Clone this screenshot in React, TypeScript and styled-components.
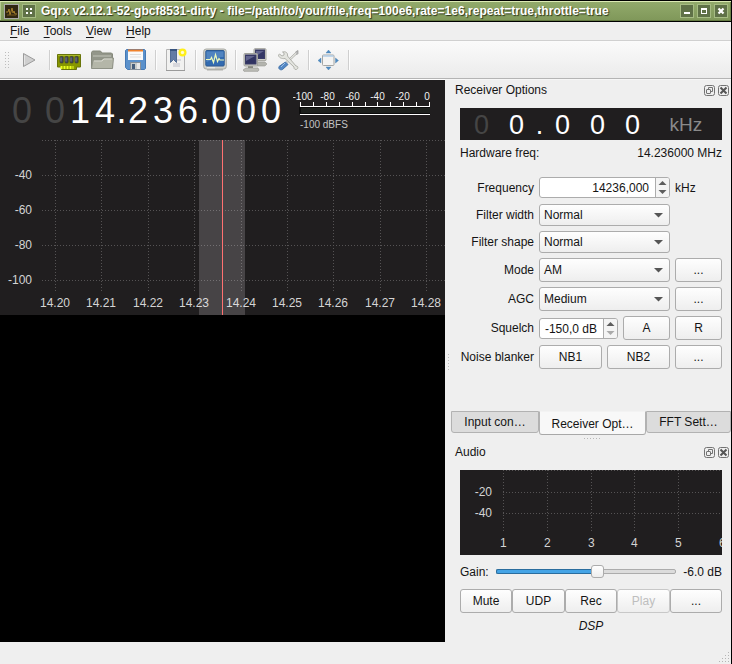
import React from "react";
import styled, { createGlobalStyle, css } from "styled-components";

const Global = createGlobalStyle`
  * { box-sizing: border-box; }
  body { margin: 0; background: #efefef; overflow: hidden; }
  button { font: inherit; color: inherit; padding: 0; margin: 0; }
`;

const Window = styled.div`
  width: 732px;
  height: 664px;
  display: flex;
  flex-direction: column;
  background: #efefef;
  border-right: 1px solid #000;
  font: 12px/14px "Liberation Sans", Arial, sans-serif;
  color: #141414;
  overflow: hidden;
`;

const TitleBar = styled.header`
  height: 22px;
  flex: none;
  display: flex;
  align-items: center;
  gap: 3px;
  padding: 0 3px 0 4px;
  border-top: 1px solid #000;
  border-bottom: 1px solid #000;
  background: linear-gradient(#93ab6c, #7f9759);
  box-shadow: inset 0 1px #dceab4, inset -1px 0 #6b8049, inset 0 -1px #657b43, inset 1px 0 #b4c890;
`;

const TitleText = styled.h1`
  flex: 1;
  margin: 0 0 0 1px;
  padding-left: 1px;
  font-size: 12px;
  line-height: 18px;
  font-weight: bold;
  letter-spacing: 0.024px;
  color: #fff;
  white-space: nowrap;
  text-shadow: 1px 1px 1px #2c361c;
`;

const WindowButton = styled.button`
  width: 14px;
  height: 14px;
  display: flex;
  border: 1px solid #a6bc83;
  background: #5f7147;
`;

const AppIcon = styled.span`
  width: 15px;
  height: 15px;
  display: flex;
  border: 1px solid #aaa;
  background: #302612;
`;

const WindowControls = styled.div`
  display: flex;
  gap: 3px;
`;

const MenuBar = styled.nav`
  height: 19px;
  flex: none;
  display: flex;
  gap: 14.3px;
  padding: 2px 10px 0;
  border-bottom: 1px solid #d0d0d0;
  u { text-underline-offset: 2px; }
`;

const ToolBar = styled.div`
  height: 38px;
  flex: none;
  display: flex;
  align-items: center;
  background: linear-gradient(#fafafa, #ebebeb);
  border-bottom: 1px solid #b4b4b4;
  border-top: 1px solid #fbfbfb;
`;

const Handle = styled.svg`
  width: 13px;
  height: 20px;
`;

const Tool = styled.button`
  width: 33px;
  height: 34px;
  border: 0;
  background: none;
  padding: 0 0 0 4px;
  display: flex;
  align-items: center;
`;

const Separator = styled.i`
  width: 2px;
  height: 20px;
  margin: 0 2px 0 3px;
  background: linear-gradient(90deg, #cfcfcf 50%, #fdfdfd 50%);
`;

const Workspace = styled.div`
  flex: 1;
  display: flex;
  min-height: 0;
`;

const Receiver = styled.main`
  width: 445px;
  height: 563px;
  flex: none;
  display: flex;
  flex-direction: column;
  background: #000;
  border-top: 1px solid #fcfcfc;
`;

const ReceiverHeader = styled.div`
  height: 60px;
  display: flex;
  background: #201e1f;
`;

const Digits = styled.div<{ $small?: boolean }>`
  display: flex;
  color: #fff;
  ${({ $small }) =>
    $small
      ? css`width: 186px; padding-left: 4px; font-size: 27px; line-height: 34px;`
      : css`width: 293px; padding-left: 9.5px; font-size: 36px; line-height: 61px;`}
`;

const Digit = styled.span<{ $w: number; $dim?: boolean }>`
  width: ${(p) => p.$w}px;
  flex: none;
  display: flex;
  justify-content: center;
  color: ${(p) => (p.$dim ? "#454545" : "inherit")};
`;

const Side = styled.aside`
  flex: 1;
  min-width: 0;
  display: flex;
  border-top: 1px solid #f6f6f6;
`;

const Splitter = styled.svg`
  width: 6px;
  height: 562px;
  flex: none;
`;

const Docks = styled.div`
  flex: 1;
  min-width: 0;
`;

const DockTitle = styled.div`
  height: 20px;
  display: flex;
  align-items: center;
  gap: 3px;
  padding: 0 2px 0 4px;
  span { flex: 1; }
`;

const Display = styled.div`
  width: 262px;
  height: 32px;
  margin: 8px 0 0 9px;
  display: flex;
  background: #201e1f;
  overflow: hidden;
`;

const Unit = styled.span`
  margin-left: 23.5px;
  font-size: 19px;
  line-height: 34px;
  color: #8a8a8a;
`;

const HardwareFrequency = styled.div`
  display: flex;
  justify-content: space-between;
  width: 262px;
  margin: 6px 0 0 9px;
  height: 14px;
`;

const Form = styled.div`
  display: grid;
  height: 234px;
  margin: 17px 9px 0 0;
  align-content: start;
`;

const Field = styled.div<{ $h: number; $gap: number }>`
  height: ${(p) => p.$h}px;
  margin-bottom: ${(p) => p.$gap}px;
  display: flex;
  align-items: center;
  gap: 5px;
`;

const Label = styled.label`
  width: 83px;
  text-align: right;
  white-space: nowrap;
`;

const frame = css`
  border: 1px solid #acacac;
  border-radius: 3px;
  background: linear-gradient(#fefefe, #eeeeee);
`;

const PushButton = styled.button<{ $w: number }>`
  ${frame}
  width: ${(p) => p.$w}px;
  height: 24px;
  flex: none;
  display: flex;
  align-items: center;
  justify-content: center;
  &:disabled { color: #bebebe; border-color: #c8c8c8; }
`;

const Combo = styled.div<{ $h: number }>`
  ${frame}
  width: 131px;
  height: ${(p) => p.$h}px;
  flex: none;
  display: flex;
  align-items: center;
  justify-content: space-between;
  padding: 0 6px 0 4px;
`;

const Spin = styled.div<{ $w: number }>`
  ${frame}
  width: ${(p) => p.$w}px;
  height: 21px;
  flex: none;
  display: flex;
  background: #fff;
  text-align: right;
  overflow: hidden;
  span { flex: 1; line-height: 20px; padding-right: 6px; white-space: nowrap; }
  svg { background: #f4f4f4; border-left: 1px solid #acacac; }
`;

const Tabs = styled.div`
  display: flex;
  height: 24px;
`;

const Tab = styled.button<{ $w: number; $active?: boolean }>`
  width: ${(p) => p.$w}px;
  height: ${(p) => (p.$active ? 24 : 22)}px;
  flex: none;
  text-align: center;
  border: 1px solid #b2b2b2;
  border-radius: 0 0 3px 3px;
  background: ${(p) => (p.$active ? "#f8f8f8" : "#dcdcdc")};
  ${(p) => p.$active && css`border-top-color: #f3f3f3; border-bottom-color: #a8a8a8; padding-top: 1px;`}
`;

const DockGrip = styled.svg`
  display: block;
  width: 280px;
  height: 7px;
`;

const AudioPlot = styled.svg`
  display: block;
  width: 262px;
  height: 85px;
  margin: 8px 0 0 9px;
`;

const GainRow = styled.div`
  width: 262px;
  height: 14px;
  margin: 10px 0 0 9px;
  display: flex;
  align-items: center;
  justify-content: space-between;
`;

const Track = styled.div`
  width: 180px;
  height: 5px;
  margin: 0 0 1px 1px;
  display: flex;
  align-items: center;
  border: 1px solid #acacac;
  border-radius: 2px;
  background: #dcdcdc;
`;

const Filled = styled.i`
  width: 96px;
  height: 5px;
  margin-left: -1px;
  flex: none;
  border: 1px solid #2a6d9e;
  border-right: 0;
  border-radius: 2px 0 0 2px;
  background: #45a4e6;
`;

const Knob = styled.i`
  ${frame}
  width: 13px;
  height: 13px;
  margin-left: -1px;
  flex: none;
`;

const AudioButtons = styled.div`
  display: flex;
  margin: 10px 0 0 9px;
`;

const DspStatus = styled.div`
  width: 262px;
  margin: 6px 0 0 9px;
  font-style: italic;
  text-align: center;
`;

const StatusBar = styled.footer`
  height: 22px;
  flex: none;
  display: flex;
  justify-content: flex-end;
  align-items: flex-end;
`;

const Meter = () => (
  <svg width="150" height="60" fontSize="10" fill="#f0f0f0">
    {[-100, -80, -60, -40, -20, 0].map((v, i) => (
      <text key={v} x={i === 5 ? 134 : 9.5 + i * 25} y="20" textAnchor="middle">{v}</text>
    ))}
    <rect x="6" y="27" width="131" height="7" fill="#0c0c0c" />
    <rect x="8" y="28" width="129" height="5" fill="#1c1f1c" />
    <g fill="#fff" shapeRendering="crispEdges">
      {[7, 20, 33, 46, 59, 72, 84, 97, 110, 123, 136].map((x) => (
        <rect key={x} x={x} y="22" width="1" height="5" />
      ))}
      <rect x="7" y="26" width="130" height="1" />
      <rect x="7" y="34" width="130" height="1" />
    </g>
    <text x="7" y="48" fill="#c4c4c4">-100 dBFS</text>
  </svg>
);

const gridX = [55, 101, 148, 194, 241, 287, 333, 380, 426];

const SpectrumPlot = styled.svg`
  display: block;
  width: 445px;
  height: 175px;
`;

const Spectrum = () => (
  <SpectrumPlot fontSize="12" fill="#d4d4d4">
    <rect width="445" height="175" fill="#201e1f" />
    <g stroke="#555354" strokeDasharray="1 2" shapeRendering="crispEdges">
      {gridX.map((x) => <path key={x} d={`M${x + 0.5} 0V152`} />)}
      {[0, 35, 70, 105, 140].map((y) => <path key={y} d={`M42 ${y + 0.5}H445`} />)}
    </g>
    {["-40", "-60", "-80", "-100"].map((t, i) => (
      <text key={t} x="32" y={39 + i * 35} textAnchor="end">{t}</text>
    ))}
    {gridX.map((x, i) => (
      <text key={x} x={x} y="167" textAnchor="middle">{`14.2${i}`}</text>
    ))}
    <rect x="199" width="46" height="175" fill="#fdf8fd" fillOpacity=".175" />
    <rect x="222" width="1" height="175" fill="#ff7171" />
  </SpectrumPlot>
);

const Audio = () => (
  <AudioPlot fontSize="12" fill="#d4d4d4">
    <rect width="262" height="85" fill="#201e1f" />
    <g stroke="#555354" strokeDasharray="1 2" shapeRendering="crispEdges">
      {[43, 87, 131, 174, 218].map((x) => <path key={x} d={`M${x + 0.5} 0V62`} />)}
      {[0, 22, 43].map((y) => <path key={y} d={`M43 ${y + 0.5}H262`} />)}
    </g>
    <text x="32" y="26" textAnchor="end">-20</text>
    <text x="32" y="47" textAnchor="end">-40</text>
    {[43, 87, 131, 174, 218, 262].map((x, i) => (
      <text key={x} x={x + 0.3} y="77" textAnchor="middle">{i + 1}</text>
    ))}
  </AudioPlot>
);

const DockButtons = () => (
  <>
    <svg width="11" height="11" fill="none" stroke="#737373">
      <rect x=".5" y=".5" width="10" height="10" rx="2" />
      <rect x="2.5" y="4.5" width="4" height="4" rx=".5" />
      <path d="M4.5 4V2.5h4v4H7" />
    </svg>
    <svg width="11" height="11" fill="none" stroke="#737373">
      <rect x=".5" y=".5" width="10" height="10" rx="2" />
      <path d="m2.500 2.500 6 6M8.500 2.500l-6 6" strokeWidth="2" stroke="#555" />
    </svg>
  </>
);

const ComboArrow = () => (
  <svg width="9" height="5"><path d="M0 0h9L4.5 4.5z" fill="#555" /></svg>
);

const SpinArrows = ({ muted }: { muted?: boolean }) => (
  <svg width="14" height="19">
    <path d="m2.500 7 4-4 4 4z" fill="#5d5d5d" />
    <path d="m2.500 12 4 4 4-4z" fill={muted ? "#aaa" : "#5d5d5d"} />
  </svg>
);

const Svg = ({ children }: { children: React.ReactNode }) => (
  <svg width="24" height="24" viewBox="0 0 24 24" fill="none">{children}</svg>
);

const PlayIcon = () => (
  <Svg><path d="M6.500 5.500v13L18 12z" fill="#cfcfcf" stroke="#9b9b9b" /><path d="M7.500 7.500v9" stroke="#e4e4e4" /></Svg>
);

const MemoryIcon = () => (
  <Svg>
    <path d="M.5 6.500h23v12.500h-4v2.500h-15V19h-4z" fill="#879600" stroke="#69750a" />
    <path d="M1 7.500h22" stroke="#a8b72b" />
    {[3, 8, 13, 18].map((x) => (
      <g key={x}>
        <rect x={x} y="8.500" width="3.200" height="6.500" rx="1" fill="#424853" stroke="#363b32" strokeWidth=".6" />
        <path d={`M${x + 1} 9.500v4`} stroke="#8a919a" strokeWidth=".8" />
      </g>
    ))}
    <path d="M3.500 19.500h13" stroke="#eaff20" strokeWidth="3" strokeDasharray="2 1" />
  </Svg>
);

const FolderIcon = () => (
  <Svg>
    <path d="M1.500 20V4.500l1-1.500h8l1.500 2h9.500l1 1V20z" fill="#93968a" stroke="#85887b" />
    <path d="M3 8h18" stroke="#c4c6bb" />
    <path d="M1.500 20.500 3 12h8l2-2h10.500l-1 10.500z" fill="#b4b6a8" stroke="#8f9286" />
    <path d="M4 13h8l2-2h8" stroke="#d5d6cd" />
  </Svg>
);

const SaveIcon = () => (
  <Svg>
    <path d="M3.500 1.500h18l1 1v18l-1 1h-17l-2-2v-17z" fill="#5b91cb" stroke="#4679b4" />
    <path d="M5 2h15v10H5z" fill="#fafafa" /><path d="M5 2.500h15" stroke="#f0822c" strokeWidth="2" />
    <path d="M7 6.500h11M7 9h11" stroke="#dedede" />
    <rect x="7.500" y="14.500" width="10" height="7" fill="#c8cbca" stroke="#87919b" />
    <rect x="9" y="16" width="3" height="5" fill="#455e7c" />
    <path d="M14 15h3v6h-3z" fill="#e8e8e8" />
  </Svg>
);

const BookmarkIcon = () => (
  <Svg>
    <path d="M3.500 1.500h18v21h-18z" fill="#f1f1f0" stroke="#b4b4b4" />
    <path d="M3 22.500h19" stroke="#9a9a9a" />
    <path d="M10 15h7v4h-7zM14 11h4v2h-4z" fill="#d7d7dc" />
    <path d="M7.500 1.500h6v13l-3-3-3 3z" fill="#637ca5" stroke="#526d95" />
    <path d="M7 2h7" stroke="#38547f" strokeWidth="2" />
    <circle cx="19.500" cy="4.500" r="4" fill="#ffef19" />
    <circle cx="19.500" cy="4.500" r="1.700" fill="#fffbd0" />
  </Svg>
);

const MonitorIcon = () => (
  <Svg>
    <path d="M4 21h16v1.500H4z" fill="#b2b2ae" />
    <rect x=".7" y="1" width="22.600" height="20" rx="2.500" fill="#d2d3cd" stroke="#aaaba5" />
    <rect x="2.800" y="2.500" width="18.400" height="15.500" rx="1" fill="#326bb1" stroke="#2e5b91" />
    <path d="M3.500 3.500h17V9c-6 0-10 2-17 5z" fill="#5084c0" />
    <path d="M3 11.500h4.500l1-2 2 5 2-8 2 7 1.500-3 1 1.500H21" stroke="#ebf9bb" strokeWidth="1.200" />
    <path d="M4 19.800h8" stroke="#f1f1ee" />
  </Svg>
);

const NetworkIcon = () => (
  <Svg>
    <path d="M14 14h8l2 2-2 2h-8z" fill="#b3b4ae" stroke="#9a9a94" strokeWidth=".6" />
    <rect x="11" y=".7" width="12" height="12" rx="1" fill="#cfcfc9" stroke="#a0a19b" />
    <rect x="12.500" y="2" width="9" height="8.500" fill="#343766" stroke="#3a3c66" />
    <path d="M13 3h8l-8 5z" fill="#60638e" />
    <path d="M3 20h12l1 2-1 1.300H1L0 22z" fill="#bcbdb7" stroke="#999a94" strokeWidth=".7" />
    <path d="M5 17.500h5V20H5z" fill="#85867f" />
    <rect x="1" y="5.500" width="13.500" height="12.500" rx="1" fill="#cfcfc9" stroke="#a0a19b" />
    <rect x="2.500" y="7" width="10.500" height="9" fill="#303362" stroke="#3a3c66" />
    <path d="M3 8h9l-9 5z" fill="#62658f" />
  </Svg>
);

const ToolsIcon = () => (
  <Svg>
    <path d="M21 4.500 11 14" stroke="#969791" strokeWidth="2.300" />
    <path d="M21 4.500 11 14" stroke="#e9e9e5" strokeWidth="1.100" />
    <path d="m19.500 4 2.500-1.500v3L20.500 7" fill="#bbb" stroke="#888" strokeWidth=".6" />
    <path d="m2.500 7 1-1 2.500 2 2-1V5L6.500 4c3.500-1 5.500 1 5 4l8.500 10c3 0 2 3.500 0 3.500-2 0-2-1.500-2-2.500L9 10.500c-3.500.500-6.500-1-6.500-3.500z" fill="#e3e4df" stroke="#aaaba5" strokeWidth=".9" />
    <path d="M9.500 14 12 16.500 6.500 21.500c-2 1-4.500-.500-3.500-3z" fill="#5387c5" stroke="#4574aa" />
    <path d="m5 19 4-4" stroke="#9bbee5" />
  </Svg>
);

const FullscreenIcon = () => (
  <Svg>
    <rect x="6.500" y="7" width="11.500" height="10.500" rx="1" fill="#f4f4f3" stroke="#a5a6a4" />
    <path d="M7 8h10.500" stroke="#b1cce7" strokeWidth="1.500" />
    <g fill="#4d8bc4" stroke="#4a7dac" strokeWidth=".4">
      <path d="M12.500 2 15 5h-5zM12.500 22 15 19h-5zM2 12.500 5 10v5zM22.500 12.500 19.500 10v5z" />
    </g>
  </Svg>
);

export default function App() {
  return (
    <>
      <Global />
      <Window>
        <TitleBar>
          <AppIcon>
            <svg width="13" height="13" fill="none"><path d="M1 7h2l1-3 1 6 2-7 1 5 1-2 1 3h2" stroke="#a57f2b" /><path d="M2 10h9" stroke="#76581d" /></svg>
          </AppIcon>
          <WindowButton>
            <svg width="12" height="12" fill="#fff"><path d="M3 3h2v2H3zM7 3h2v2H7zM3 7h2v2H3zM7 7h2v2H7z" /></svg>
          </WindowButton>
          <TitleText>Gqrx v2.12.1-52-gbcf8531-dirty - file=/path/to/your/file,freq=100e6,rate=1e6,repeat=true,throttle=true</TitleText>
          <WindowControls>
            <WindowButton><svg width="12" height="12"><path d="M3 7h6v2H3z" fill="#fff" /></svg></WindowButton>
            <WindowButton><svg width="12" height="12"><path d="M3 3h6v6H3zM4 5v3h4V5z" fill="#fff" fillRule="evenodd" /></svg></WindowButton>
            <WindowButton><svg width="12" height="12"><path d="m3.500 3.500 5 5m0-5-5 5" stroke="#fff" strokeWidth="2.200" /></svg></WindowButton>
          </WindowControls>
        </TitleBar>
        <MenuBar>
          <span><u>F</u>ile</span>
          <span><u>T</u>ools</span>
          <span><u>V</u>iew</span>
          <span><u>H</u>elp</span>
        </MenuBar>
        <ToolBar>
          <Handle fill="#bdbdbd">
            {[0, 3, 6, 9, 12, 15].map((y) => <path key={y} d={`M5 ${y + 2}h1v1h-1zM8 ${y + 2}h1v1h-1z`} />)}
          </Handle>
          <Tool><PlayIcon /></Tool>
          <Separator />
          <Tool><MemoryIcon /></Tool>
          <Tool><FolderIcon /></Tool>
          <Tool><SaveIcon /></Tool>
          <Separator />
          <Tool><BookmarkIcon /></Tool>
          <Separator />
          <Tool><MonitorIcon /></Tool>
          <Separator />
          <Tool><NetworkIcon /></Tool>
          <Tool><ToolsIcon /></Tool>
          <Separator />
          <Tool><FullscreenIcon /></Tool>
          <Separator />
        </ToolBar>
        <Workspace>
          <Receiver>
            <ReceiverHeader>
              <Digits>
                <Digit $w={25} $dim>0</Digit>
                <Digit $w={8} />
                <Digit $w={25} $dim>0</Digit>
                <Digit $w={25}>1</Digit>
                <Digit $w={25}>4</Digit>
                <Digit $w={8}>.</Digit>
                <Digit $w={25}>2</Digit>
                <Digit $w={25}>3</Digit>
                <Digit $w={25}>6</Digit>
                <Digit $w={8}>.</Digit>
                <Digit $w={25}>0</Digit>
                <Digit $w={25}>0</Digit>
                <Digit $w={25}>0</Digit>
              </Digits>
              <Meter />
            </ReceiverHeader>
            <Spectrum />
          </Receiver>
          <Side>
            <Splitter fill="#bcbcbc">
              {[0, 3, 6, 9, 12, 15].map((y) => <rect key={y} x="3" y={274 + y} width="1" height="1" />)}
            </Splitter>
            <Docks>
              <DockTitle><span>Receiver Options</span><DockButtons /></DockTitle>
              <Display>
                <Digits $small>
                  <Digit $w={35} $dim>0</Digit>
                  <Digit $w={35}>0</Digit>
                  <Digit $w={11}>.</Digit>
                  <Digit $w={35}>0</Digit>
                  <Digit $w={35}>0</Digit>
                  <Digit $w={35}>0</Digit>
                </Digits>
                <Unit>kHz</Unit>
              </Display>
              <HardwareFrequency><span>Hardware freq:</span><span>14.236000 MHz</span></HardwareFrequency>
              <Form>
                <Field $h={21} $gap={6}>
                  <Label>Frequency</Label>
                  <Spin $w={131}><span>14236,000</span><SpinArrows /></Spin>
                  kHz
                </Field>
                <Field $h={22} $gap={5}><Label>Filter width</Label><Combo $h={22}>Normal<ComboArrow /></Combo></Field>
                <Field $h={22} $gap={5}><Label>Filter shape</Label><Combo $h={22}>Normal<ComboArrow /></Combo></Field>
                <Field $h={24} $gap={5}><Label>Mode</Label><Combo $h={24}>AM<ComboArrow /></Combo><PushButton $w={47}>...</PushButton></Field>
                <Field $h={24} $gap={5}><Label>AGC</Label><Combo $h={24}>Medium<ComboArrow /></Combo><PushButton $w={47}>...</PushButton></Field>
                <Field $h={24} $gap={5}>
                  <Label>Squelch</Label>
                  <Spin $w={79}><span>-150,0 dB</span><SpinArrows muted /></Spin>
                  <PushButton $w={47}>A</PushButton>
                  <PushButton $w={47}>R</PushButton>
                </Field>
                <Field $h={24} $gap={0}>
                  <Label>Noise blanker</Label>
                  <PushButton $w={63}>NB1</PushButton>
                  <PushButton $w={63}>NB2</PushButton>
                  <PushButton $w={47}>...</PushButton>
                </Field>
              </Form>
              <Tabs>
                <Tab $w={88}>Input con…</Tab>
                <Tab $w={107} $active>Receiver Opt…</Tab>
                <Tab $w={85}>FFT Sett…</Tab>
              </Tabs>
              <DockGrip fill="#b8b8b8">
                {[0, 3, 6, 9, 12, 15].map((x) => <rect key={x} x={133 + x} y="3" width="1" height="1" />)}
              </DockGrip>
              <DockTitle><span>Audio</span><DockButtons /></DockTitle>
              <Audio />
              <GainRow>
                <span>Gain:</span>
                <Track><Filled /><Knob /></Track>
                <span>-6.0 dB</span>
              </GainRow>
              <AudioButtons>
                <PushButton $w={52}>Mute</PushButton>
                <PushButton $w={53}>UDP</PushButton>
                <PushButton $w={52}>Rec</PushButton>
                <PushButton $w={53} disabled>Play</PushButton>
                <PushButton $w={52}>...</PushButton>
              </AudioButtons>
              <DspStatus>DSP</DspStatus>
            </Docks>
          </Side>
        </Workspace>
        <StatusBar>
          <svg width="14" height="14" fill="#b5b5b5">
            {[0, 1, 2, 3].flatMap((r) =>
              Array.from({ length: r + 1 }, (_, c) => (
                <rect key={`${r}-${c}`} x={11 - c * 3} y={2 + r * 3} width="1" height="1" />
              ))
            )}
          </svg>
        </StatusBar>
      </Window>
    </>
  );
}
